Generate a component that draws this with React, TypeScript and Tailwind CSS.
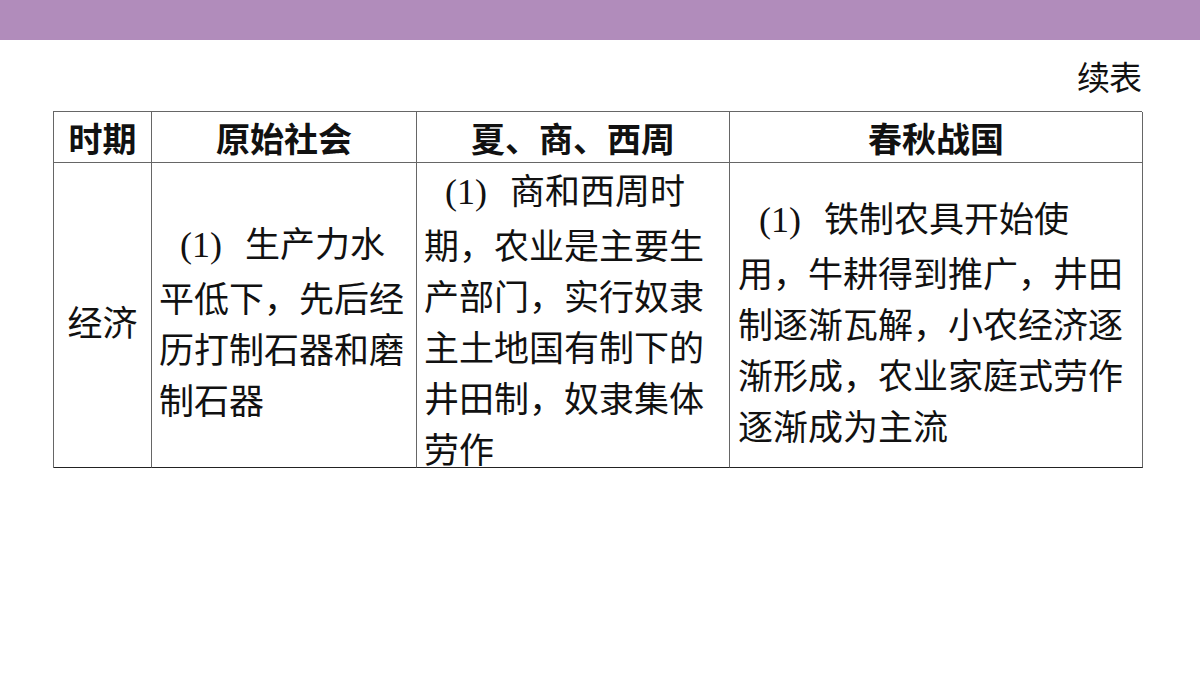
const cjk = { fontFamily: '"Noto Sans CJK SC", "Noto Sans", sans-serif' };
const serif = { fontFamily: '"Liberation Serif", "Noto Sans CJK SC", serif' };

function Num() {
  return (
    <span className="inline-block w-[86px] pl-[21px] text-[36px]" style={serif}>
      (1)
    </span>
  );
}

function Lines({ first, rest }: { first: string; rest: string[] }) {
  return (
    <>
      <div className="whitespace-nowrap">
        <Num />
        {first}
      </div>
      {rest.map((l) => (
        <div key={l} className="whitespace-nowrap">
          {l}
        </div>
      ))}
    </>
  );
}

export default function App() {
  const cell = "border-r border-b border-[#666]";
  const body = "border-r border-b border-[#666] border-b-[#222]";
  return (
    <div className="w-[1200px] h-[675px] bg-white text-[#111] overflow-hidden" style={cjk}>
      <div className="h-[40px] bg-[#b18cbb]" />
      <div className="mt-[16px] pr-[59px] flex justify-end">
        <span className="text-[33px] leading-[40px] tracking-[-1px]">续表</span>
      </div>
      <div className="mt-[15px] ml-[53px] w-[1089px] grid grid-cols-[98px_265px_313px_413px] border-l border-t border-[#666]">
        {["时期", "原始社会", "夏、商、西周", "春秋战国"].map((h) => (
          <div key={h} className={`${cell} h-[51px] flex items-center justify-center font-bold text-[34px] leading-[51px]`}>
            {h}
          </div>
        ))}
        <div className={`${body} h-[305px] flex flex-col justify-center items-center pt-[10px] text-[35px] leading-[51px]`}>
          经济
        </div>
        <div className={`${body} h-[305px] flex flex-col justify-center px-[7px] pt-[10px] text-[35px] leading-[51px]`}>
          <Lines first="生产力水" rest={["平低下，先后经", "历打制石器和磨", "制石器"]} />
        </div>
        <div className={`${body} h-[305px] flex flex-col justify-start px-[7px] pt-0 text-[35px] leading-[51px]`}>
          <Lines
            first="商和西周时"
            rest={["期，农业是主要生", "产部门，实行奴隶", "主土地国有制下的", "井田制，奴隶集体", "劳作"]}
          />
        </div>
        <div className={`${body} h-[305px] flex flex-col justify-center px-[8px] pt-[10px] text-[35px] leading-[51px]`}>
          <Lines
            first="铁制农具开始使"
            rest={["用，牛耕得到推广，井田", "制逐渐瓦解，小农经济逐", "渐形成，农业家庭式劳作", "逐渐成为主流"]}
          />
        </div>
      </div>
    </div>
  );
}
